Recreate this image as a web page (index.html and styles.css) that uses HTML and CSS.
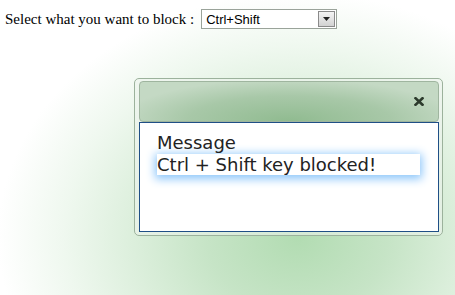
FILE: index.html
```html
<!DOCTYPE html>
<html lang="en">
<head>
<meta charset="UTF-8">
<meta name="viewport" content="width=device-width, initial-scale=1.0">
<title>Block Keys</title>
<link rel="stylesheet" href="styles.css">
</head>
<body>

<div class="toolbar">
<label for="blockType">Select what you want to block :</label>
<div class="fake-select">
<span class="select-value">Ctrl+Shift</span>
<span class="select-arrow">
<svg width="7" height="4" viewBox="0 0 7 4"><path d="M0 0 H7 L3.5 4 Z" fill="#222"/></svg>
</span>
</div>
</div>

<!-- Popup dialog -->
<div class="dialog">
<div class="dialog-header">
<svg class="dialog-close" width="10" height="9" viewBox="0 0 10 9">
<path d="M1.5 1.2 L8.5 7.8 M8.5 1.2 L1.5 7.8" stroke="#2c3a2c" stroke-width="2.6" stroke-linecap="square"/>
</svg>
</div>
<div class="dialog-body">
<div class="msg-title">Message</div>
<div class="msg-text">Ctrl + Shift key blocked!</div>
</div>
</div>

</body>
</html>
```

FILE: styles.css
```css
html {
height: 100%;
}

body {
margin: 0;
padding: 9px 5px;
height: 100%;
box-sizing: border-box;
font-family: "Liberation Serif", serif;
font-size: 15px;
color: #000;
background: radial-gradient(ellipse 300px 245px at 298px 238px, #b2dcb2 0%, #c6e4c6 30%, #dcefdc 55%, #eff8ef 78%, #ffffff 100%);
overflow: hidden;
}

/* Top row with label and dropdown */
.toolbar {
display: flex;
align-items: center;
gap: 7px;
}

.fake-select {
display: flex;
align-items: center;
justify-content: space-between;
width: 136px;
height: 20px;
box-sizing: border-box;
border: 1px solid #9aa39a;
background: #fff;
font-family: "Liberation Sans", sans-serif;
font-size: 13px;
}

.select-value {
padding-left: 4px;
}

.select-arrow {
display: flex;
align-items: center;
justify-content: center;
width: 17px;
height: 16px;
margin-right: 1px;
border: 1px solid #8a8a8a;
background: linear-gradient(#f4f4f4, #d2d2d2);
box-sizing: border-box;
}

/* Dialog */
.dialog {
position: absolute;
left: 134px;
top: 78px;
width: 300px;
padding: 2px 3px 3px 4px;
border: 1px solid #9cb29c;
border-radius: 5px;
background: rgba(236, 244, 236, 0.6);
font-family: "DejaVu Sans", Verdana, sans-serif;
}

.dialog-header {
display: flex;
justify-content: flex-end;
align-items: center;
height: 41px;
box-sizing: border-box;
padding-right: 14px;
border: 1px solid #9fb59f;
border-radius: 4px;
background: radial-gradient(ellipse 170px 42px at 50% 100%, #90bb90 0%, #a8c8a8 60%, #c4d9c4 100%);
}

.dialog-body {
height: 110px;
box-sizing: border-box;
border: 1px solid #1f4f86;
background: #fff;
padding: 9px 17px 0 17px;
}

.msg-title {
font-size: 18px;
line-height: 22px;
color: #222;
}

.msg-text {
font-size: 18px;
line-height: 21px;
color: #222;
width: 263px;
box-shadow: 0 2px 10px 2px #8cc6fa;
}
```
